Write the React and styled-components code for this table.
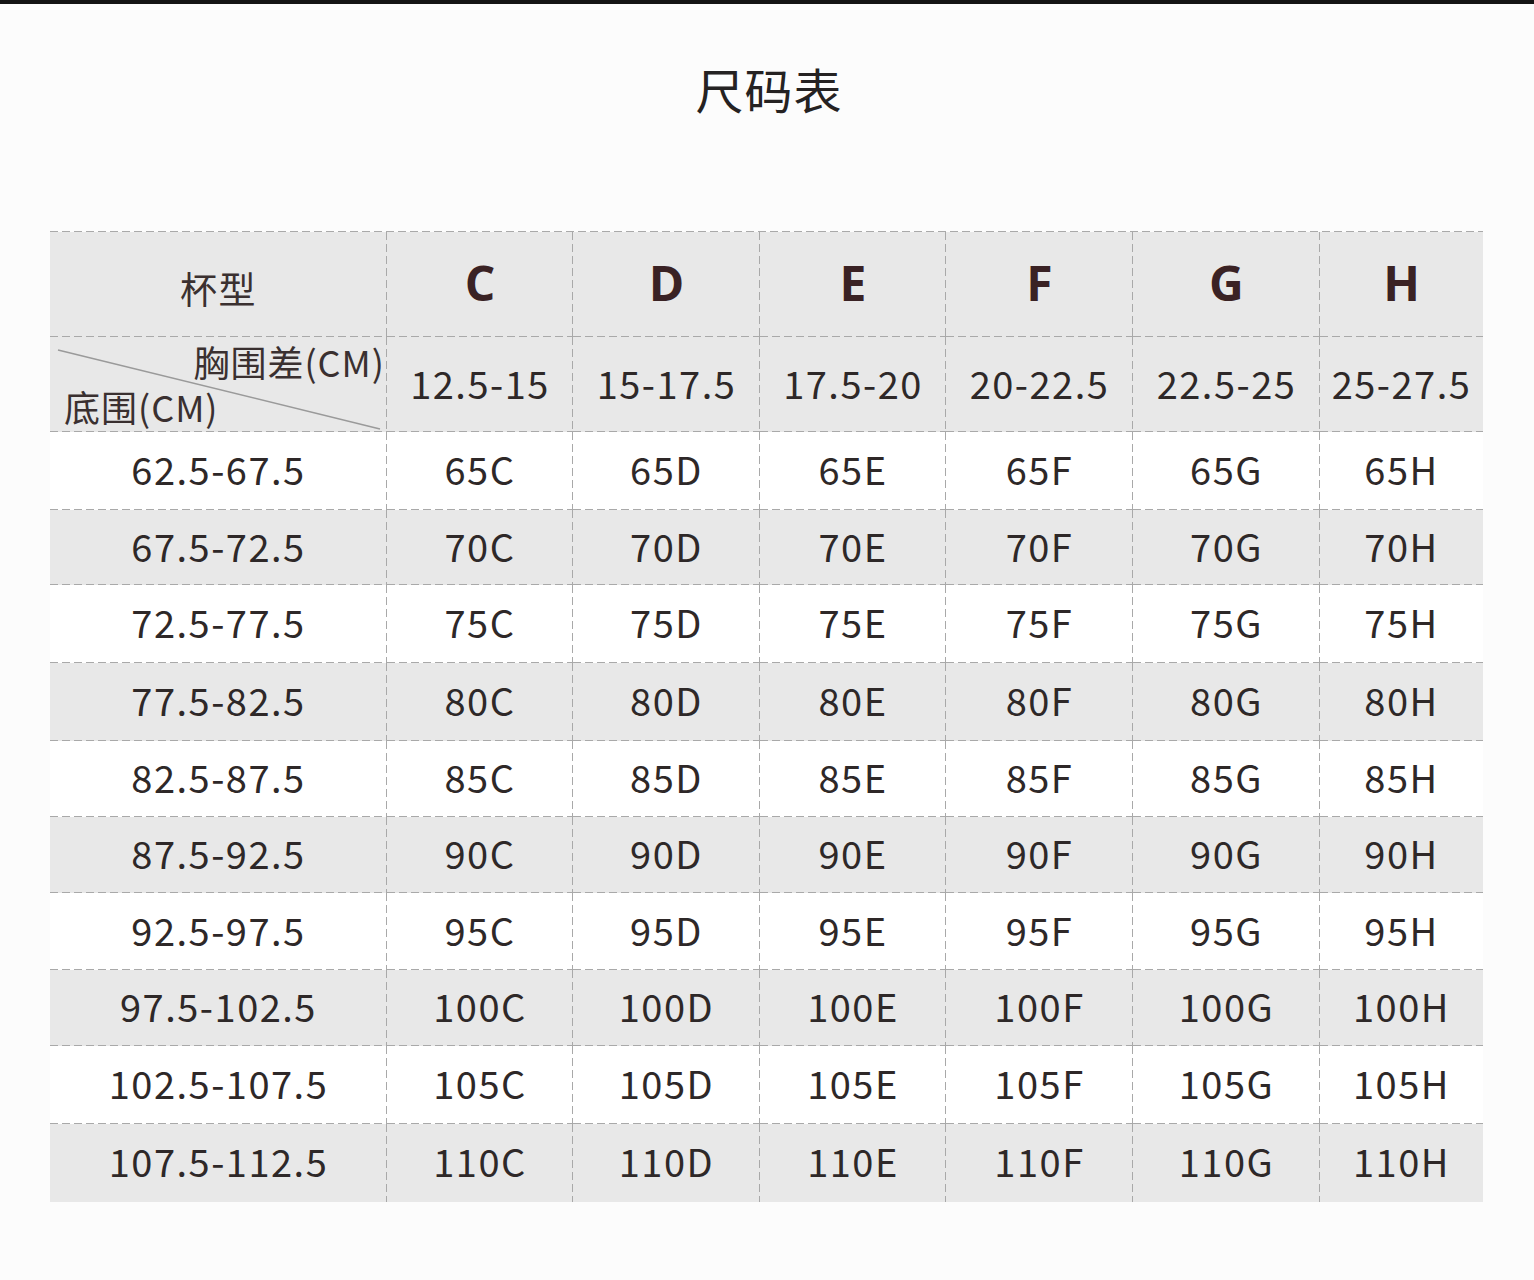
import React from 'react';
import styled, { createGlobalStyle, css } from 'styled-components';

const GlobalStyle = createGlobalStyle`
  html, body {
    margin: 0;
    padding: 0;
    background: #fcfcfc;
  }
  body {
    font-family: "Noto Sans CJK SC", "Noto Sans", sans-serif;
    color: #2e2828;
  }
`;

const dashColor = '#a9a9a9';
const vDash = `repeating-linear-gradient(to bottom, ${dashColor} 0 8px, transparent 8px 12px)`;
const hDash = `repeating-linear-gradient(to right, ${dashColor} 0 8px, transparent 8px 12px)`;

const Page = styled.div`
  width: 1534px;
  height: 1280px;
  overflow: hidden;
  border-top: 4px solid #141414;
  box-sizing: border-box;
`;

const Title = styled.h1`
  margin: 0;
  padding-top: 54px;
  height: 227px;
  box-sizing: border-box;
  text-align: center;
  font-size: 48px;
  line-height: 60px;
  font-weight: 400;
  letter-spacing: 1px;
  color: #252222;
  padding-left: 4px;
`;

const Table = styled.div`
  margin-left: 50px;
  width: 1433px;
  padding-top: 1px;
  display: grid;
  grid-template-columns: 337px 186px 187px 186px 187px 187px 163px;
  grid-template-rows: 105px 95px 78px 75px 78px 78px 76px 76px 77px 76px 78px 78px;
  background-image: ${hDash};
  background-size: 100% 1px;
  background-position: left top;
  background-repeat: no-repeat;
`;

const edges = ({ $last, $bottom }) => {
  const images = [];
  const sizes = [];
  const positions = [];
  if (!$last) {
    images.push(vDash);
    sizes.push('1px 100%');
    positions.push('right top');
  }
  if (!$bottom) {
    images.push(hDash);
    sizes.push('100% 1px');
    positions.push('left bottom');
  }
  if (!images.length) return '';
  return css`
    background-image: ${images.join(', ')};
    background-size: ${sizes.join(', ')};
    background-position: ${positions.join(', ')};
    background-repeat: no-repeat;
  `;
};

const Cell = styled.div`
  position: relative;
  display: flex;
  align-items: center;
  justify-content: center;
  box-sizing: border-box;
  padding-bottom: 5px;
  background-color: ${p => (p.$shade ? '#e8e8e8' : '#ffffff')};
  ${edges}
  font-size: 38px;
  letter-spacing: 1.5px;
  color: #2e2828;
`;

const CupLetter = styled.span`
  font-size: 48px;
  font-weight: 700;
  color: #3a2224;
  letter-spacing: 0;
  font-family: "Open Sans", "Noto Sans", sans-serif;
`;

const CupLabel = styled.span`
  font-size: 37px;
  color: #3a3030;
  padding-top: 12px;
`;

const Corner = styled(Cell)`
  display: block;
  padding: 0;
`;

const CornerTop = styled.span`
  position: absolute;
  right: 2px;
  top: 1px;
  font-size: 36px;
  line-height: 46px;
  letter-spacing: 1px;
  color: #3a3030;
`;

const CornerBottom = styled.span`
  position: absolute;
  left: 14px;
  bottom: 3px;
  font-size: 36px;
  line-height: 46px;
  letter-spacing: 1px;
  color: #3a3030;
`;

const Diagonal = styled.svg`
  position: absolute;
  left: 0;
  top: 0;
  width: 100%;
  height: 100%;
`;

const cups = ['C', 'D', 'E', 'F', 'G', 'H'];
const diffs = ['12.5-15', '15-17.5', '17.5-20', '20-22.5', '22.5-25', '25-27.5'];
const bands = [
  ['62.5-67.5', 65],
  ['67.5-72.5', 70],
  ['72.5-77.5', 75],
  ['77.5-82.5', 80],
  ['82.5-87.5', 85],
  ['87.5-92.5', 90],
  ['92.5-97.5', 95],
  ['97.5-102.5', 100],
  ['102.5-107.5', 105],
  ['107.5-112.5', 110],
];

export default function App() {
  return (
    <Page>
      <GlobalStyle />
      <Title>尺码表</Title>
      <Table>
        <Cell $shade>
          <CupLabel>杯型</CupLabel>
        </Cell>
        {cups.map((c, i) => (
          <Cell key={c} $shade $last={i === cups.length - 1}>
            <CupLetter>{c}</CupLetter>
          </Cell>
        ))}

        <Corner $shade>
          <Diagonal viewBox="0 0 337 95" preserveAspectRatio="none">
            <line x1="8" y1="13" x2="330" y2="92" stroke="#9a9a9a" strokeWidth="1.5" />
          </Diagonal>
          <CornerTop>胸围差(CM)</CornerTop>
          <CornerBottom>底围(CM)</CornerBottom>
        </Corner>
        {diffs.map((d, i) => (
          <Cell key={d} $shade $last={i === diffs.length - 1}>
            {d}
          </Cell>
        ))}

        {bands.map(([range, size], r) => {
          const shade = r % 2 === 1;
          const bottom = r === bands.length - 1;
          return (
            <React.Fragment key={range}>
              <Cell $shade={shade} $bottom={bottom}>{range}</Cell>
              {cups.map((c, i) => (
                <Cell key={c} $shade={shade} $bottom={bottom} $last={i === cups.length - 1}>
                  {size}{c}
                </Cell>
              ))}
            </React.Fragment>
          );
        })}
      </Table>
    </Page>
  );
}
